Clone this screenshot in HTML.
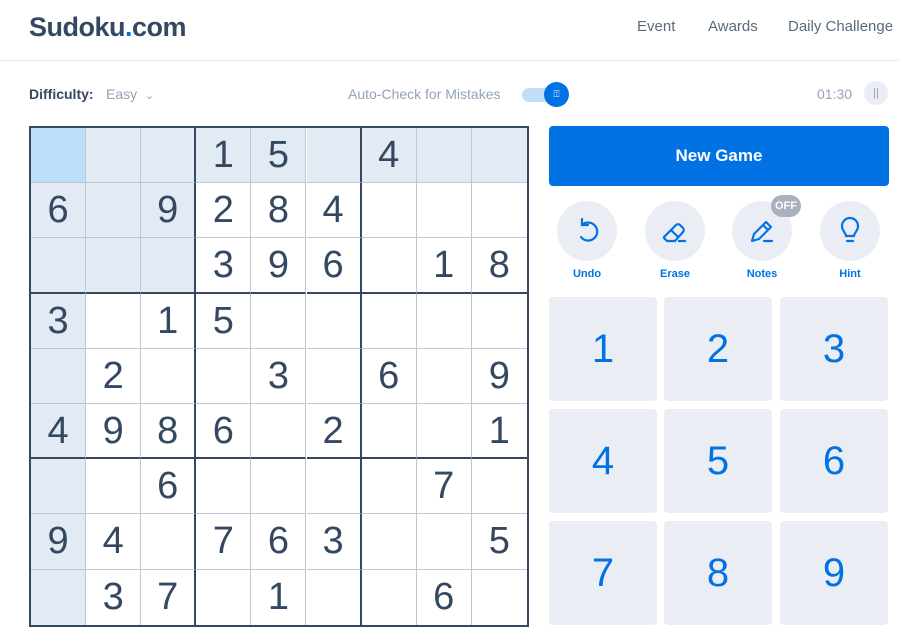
<!DOCTYPE html>
<html><head><meta charset="utf-8"><style>
*{margin:0;padding:0;box-sizing:border-box}
body{width:899px;height:643px;background:#fff;font-family:"Liberation Sans",sans-serif;position:relative;overflow:hidden;color:#344861}
.logo{position:absolute;left:29px;top:12px;font-size:27px;font-weight:bold;color:#344861;letter-spacing:-0.5px}
.logo span{color:#0072e3}
.nav{position:absolute;top:18px;font-size:15px;color:#5a6b80}
.hr{position:absolute;left:0;top:60px;width:899px;height:1px;background:#e3e8ef}
.t{position:absolute;font-size:14px;top:86px}
.grid{position:absolute;left:29px;top:126px;width:500px;height:501px;border:2px solid #344861}
.c{position:absolute;width:55.1px;height:55.2px;border-right:1px solid #bfc6d4;border-bottom:1px solid #bfc6d4;font-size:38px;color:#344861;text-align:center;line-height:55px;font-weight:300}
.ng{position:absolute;left:549px;top:126px;width:340px;height:60px;background:#0072e3;border-radius:4px;color:#fff;font-weight:bold;font-size:17px;text-align:center;line-height:60px}
.ci{position:absolute;top:201px;width:60px;height:60px;border-radius:50%;background:#eaeef4}
.lb{position:absolute;top:268px;width:80px;text-align:center;font-size:11px;color:#0072e3;font-weight:bold}
.k{position:absolute;width:108px;height:104px;background:#eaeef4;border-radius:4px;color:#0072e3;font-size:40px;text-align:center;line-height:104px;font-weight:300}
</style></head><body>
<div class="logo">Sudoku<span>.</span>com</div>
<div class="nav" style="left:637px">Event</div>
<div class="nav" style="left:708px">Awards</div>
<div class="nav" style="left:788px">Daily Challenge</div>
<div class="hr"></div>
<div class="t" style="left:29px;color:#344861;font-weight:bold">Difficulty:</div>
<div class="t" style="left:106px;color:#94a3b7">Easy&nbsp; <span style="font-size:11px">&#8964;</span></div>
<div class="t" style="left:348px;color:#94a3b7">Auto-Check for Mistakes</div>
<div style="position:absolute;left:522px;top:88px;width:34px;height:14px;border-radius:7px;background:#c2ddf8"></div>
<div style="position:absolute;left:544px;top:82px;width:25px;height:25px;border-radius:50%;background:#0072e3;color:#fff;font-size:10px;text-align:center;line-height:25px">⍐</div>
<div class="t" style="left:817px;color:#94a3b7">01:30</div>
<div style="position:absolute;left:864px;top:81px;width:24px;height:24px;border-radius:50%;background:#eaeef4;color:#94a3b7;font-size:11px;text-align:center;line-height:24px">||</div>
<div class="grid" id="g"></div>
<div class="ng">New Game</div>
<div class="ci" style="left:557px"><svg width="60" height="60" viewBox="0 0 60 60" fill="none" stroke="#0072e3" stroke-width="2.2" stroke-linecap="round"><path d="M25 24a9 9 0 1 1-1 12"/><path d="M25 18v6h6"/></svg></div>
<div class="ci" style="left:645px"><svg width="60" height="60" viewBox="0 0 60 60" fill="none" stroke="#0072e3" stroke-width="2.2" stroke-linecap="round" stroke-linejoin="round"><path d="M19 36l12-12a3 3 0 0 1 4 0l3 3a3 3 0 0 1 0 4l-8 9h-8l-3-3z M26 29l7 7 M34 40h6"/></svg></div>
<div class="ci" style="left:732px"><svg width="60" height="60" viewBox="0 0 60 60" fill="none" stroke="#0072e3" stroke-width="2.2" stroke-linecap="round" stroke-linejoin="round"><path d="M20 40l2-7 12-12 5 5-12 12z M31 24l5 5 M32 40h8"/></svg></div>
<div style="position:absolute;left:771px;top:195px;width:30px;height:22px;border-radius:11px;background:#a9b1bf;color:#fff;font-size:11px;font-weight:bold;text-align:center;line-height:22px">OFF</div>
<div class="ci" style="left:820px"><svg width="60" height="60" viewBox="0 0 60 60" fill="none" stroke="#0072e3" stroke-width="2.2" stroke-linecap="round"><path d="M26 35c0-3-4-5-4-10a8 8 0 0 1 16 0c0 5-4 7-4 10z M27 40h6"/></svg></div>
<div class="lb" style="left:547px">Undo</div>
<div class="lb" style="left:635px">Erase</div>
<div class="lb" style="left:722px">Notes</div>
<div class="lb" style="left:810px">Hint</div>
<div id="kp"></div>
<script>
var d=["000150400","609284000","000396018","301500000","020030609","498602001","006000070","940763005","037010060"];
var g=document.getElementById('g'),h='';
for(var r=0;r<9;r++)for(var c=0;c<9;c++){
var bg='#fff';if(r==0||c==0||(r<3&&c<3))bg='#e2ebf3';if(r==0&&c==0)bg='#bbdefb';
var br=(c==2||c==5)?'2px solid #344861':(c==8?'none':'');
var bb=(r==2||r==5)?'2px solid #344861':(r==8?'none':'');
var v=d[r][c]=='0'?'':d[r][c];
h+='<div class="c" style="left:'+(c*55.1)+'px;top:'+(r*55.2)+'px;background:'+bg+';'+(br?'border-right:'+br+';':'')+(bb?'border-bottom:'+bb+';':'')+'">'+v+'</div>';}
g.innerHTML=h;
var xs=[549,664,780],ys=[297,409,521],k='';
for(var i=0;i<9;i++)k+='<div class="k" style="left:'+xs[i%3]+'px;top:'+ys[Math.floor(i/3)]+'px">'+(i+1)+'</div>';
document.getElementById('kp').innerHTML=k;
</script>
</body></html>
